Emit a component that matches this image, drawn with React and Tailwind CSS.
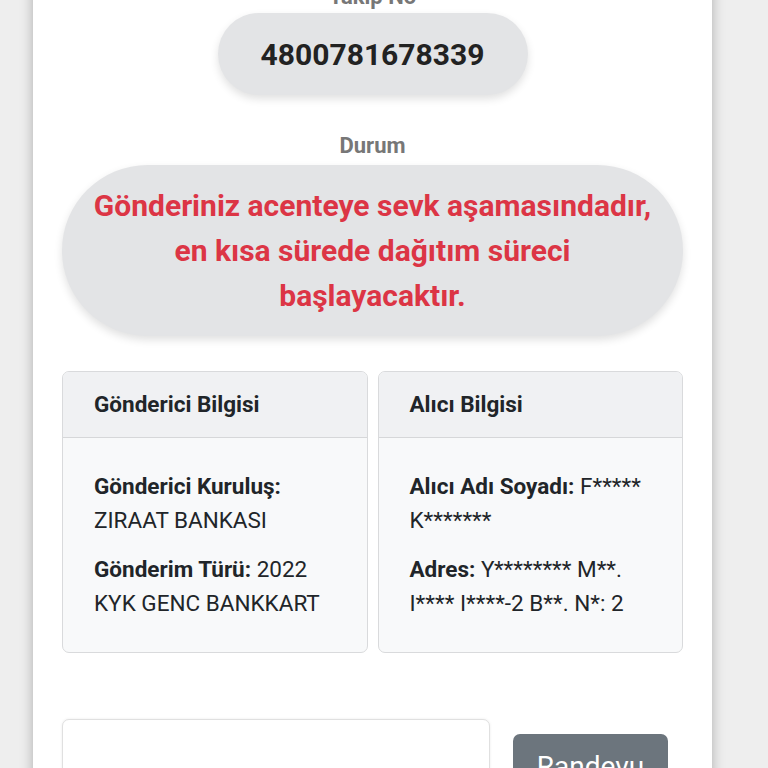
import React from "react";

const InfoCard = ({ title, children }) => (
  <div className="rounded-[7px] border border-[#d9dadc] bg-[#f8f9fa] overflow-hidden">
    <div className="h-[66px] flex items-center px-[31px] bg-[#f0f1f3] border-b border-[#d6d7d9]">
      <h3 className="text-[22.5px] font-bold text-[#212529]">{title}</h3>
    </div>
    <div className="px-[31px] pt-[31px] pb-[32px] text-[22.5px] leading-[34px] text-[#212529] space-y-[15px]">
      {children}
    </div>
  </div>
);

const App = () => {
  return (
    <div className="min-h-screen bg-[#eeeeee] overflow-hidden" style={{ fontFamily: "Roboto, 'Liberation Sans', sans-serif" }}>
      <div className="ml-[33px] w-[679px] min-h-[800px] bg-white shadow-[0_0_12px_rgba(0,0,0,0.28)]">
        <div className="px-[29px] -mt-[17px] flex flex-col items-center">
          <p className="text-[22px] leading-[28px] font-bold text-[#777]">Takip No</p>
          <div className="mt-[2px] w-[310px] h-[82px] rounded-full bg-[#e3e4e6] shadow-[0_4px_8px_rgba(0,0,0,0.12)] flex items-center justify-center">
            <span className="text-[30px] font-bold text-[#222]">4800781678339</span>
          </div>

          <p className="mt-[37px] text-[22px] leading-[28px] font-bold text-[#777]">Durum</p>
          <div className="mt-[5px] w-full rounded-full bg-[#e3e4e6] shadow-[0_4px_8px_rgba(0,0,0,0.12)] px-[22px] py-[18px] text-center">
            <p className="text-[30px] leading-[45px] font-bold text-[#dc3545]">
              Gönderiniz acenteye sevk aşamasındadır, en kısa sürede dağıtım süreci başlayacaktır.
            </p>
          </div>

          <div className="mt-[35px] w-full grid grid-cols-2 gap-[10px]">
            <InfoCard title="Gönderici Bilgisi">
              <p>
                <b>Gönderici Kuruluş:</b> ZIRAAT BANKASI
              </p>
              <p>
                <b>Gönderim Türü:</b> 2022 KYK GENC BANKKART
              </p>
            </InfoCard>
            <InfoCard title="Alıcı Bilgisi">
              <p>
                <b>Alıcı Adı Soyadı:</b> F***** K*******
              </p>
              <p>
                <b>Adres:</b> Y******** M**. I**** I****-2 B**. N*: 2
              </p>
            </InfoCard>
          </div>

          <div className="mt-[66px] w-full flex items-start">
            <div className="w-[428px] h-[120px] rounded-[7px] border border-[#e0e0e0] bg-white shadow-[0_0_3px_rgba(0,0,0,0.08)]" />
            <button className="ml-[23px] mt-[15px] w-[155px] h-[80px] rounded-[7px] bg-[#6c757d] text-white text-[28px] pt-[12px] flex justify-center items-start">
              Randevu
            </button>
          </div>
        </div>
      </div>
    </div>
  );
};

export default App;
